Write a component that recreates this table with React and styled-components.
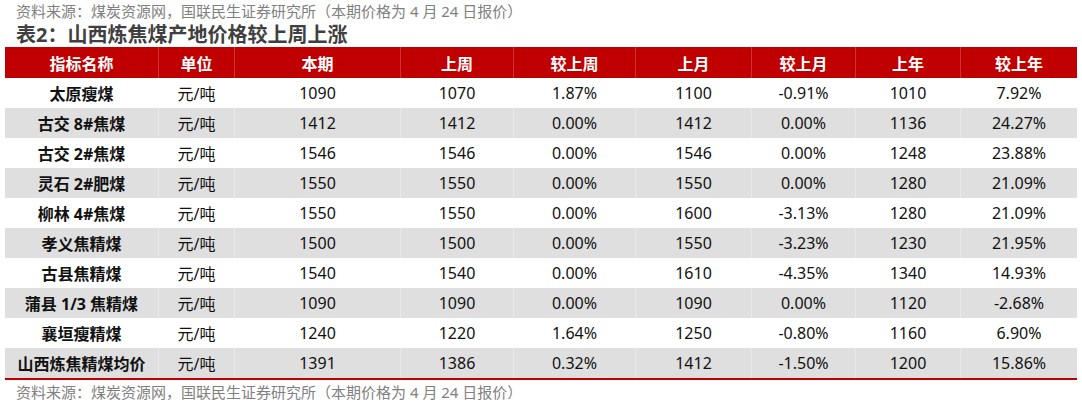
import React from "react";
import styled, { createGlobalStyle } from "styled-components";

const GlobalStyle = createGlobalStyle`
	body {
		margin: 0;
		background: #ffffff;
		font-family: "Noto Sans", "Noto Sans CJK SC", sans-serif;
	}
`;

const columns = ["指标名称", "单位", "本期", "上周", "较上周", "上月", "较上月", "上年", "较上年"];
const widths = "153px 76px 166px 113px 122px 116px 104px 105px 117px";

const rows = [
	["太原瘦煤", "元/吨", "1090", "1070", "1.87%", "1100", "-0.91%", "1010", "7.92%"],
	["古交 8#焦煤", "元/吨", "1412", "1412", "0.00%", "1412", "0.00%", "1136", "24.27%"],
	["古交 2#焦煤", "元/吨", "1546", "1546", "0.00%", "1546", "0.00%", "1248", "23.88%"],
	["灵石 2#肥煤", "元/吨", "1550", "1550", "0.00%", "1550", "0.00%", "1280", "21.09%"],
	["柳林 4#焦煤", "元/吨", "1550", "1550", "0.00%", "1600", "-3.13%", "1280", "21.09%"],
	["孝义焦精煤", "元/吨", "1500", "1500", "0.00%", "1550", "-3.23%", "1230", "21.95%"],
	["古县焦精煤", "元/吨", "1540", "1540", "0.00%", "1610", "-4.35%", "1340", "14.93%"],
	["蒲县 1/3 焦精煤", "元/吨", "1090", "1090", "0.00%", "1090", "0.00%", "1120", "-2.68%"],
	["襄垣瘦精煤", "元/吨", "1240", "1220", "1.64%", "1250", "-0.80%", "1160", "6.90%"],
	["山西炼焦精煤均价", "元/吨", "1391", "1386", "0.32%", "1412", "-1.50%", "1200", "15.86%"],
];

const source = "资料来源：煤炭资源网，国联民生证券研究所（本期价格为 4 月 24 日报价）";

const App = () => {
	return (
		<>
			<GlobalStyle />
			<Page>
				<Caption>{source}</Caption>
				<Title>表2：山西炼焦煤产地价格较上周上涨</Title>
				<Table>
					<HeaderRow>
						{columns.map((c) => (
							<HeaderCell key={c}>{c}</HeaderCell>
						))}
					</HeaderRow>
					{rows.map((r, i) => (
						<Row key={r[0]} $shaded={i % 2 === 1}>
							{r.map((v, j) => (
								<Cell key={j} $bold={j === 0} $shaded={i % 2 === 1}>
									{v}
								</Cell>
							))}
						</Row>
					))}
				</Table>
				<Caption $footer>{source}</Caption>
			</Page>
		</>
	);
};

const Page = styled.div`
	width: 1082px;
	height: 405px;
	overflow: hidden;
	padding: 0 5px;
	box-sizing: border-box;
`;

const Caption = styled.div`
	font-size: 15px;
	line-height: 22px;
	color: #808080;
	padding-left: 11px;
	margin-top: ${(p) => (p.$footer ? "1px" : "0")};
	white-space: nowrap;
`;

const Title = styled.div`
	font-size: 20px;
	font-weight: 700;
	line-height: 25px;
	color: #404040;
	padding-left: 11px;
	white-space: nowrap;
`;

const Table = styled.div`
	display: flex;
	flex-direction: column;
	border-bottom: 2px solid #c00000;
`;

const HeaderRow = styled.div`
	display: grid;
	grid-template-columns: ${widths};
	height: 31px;
	background: #c00000;
`;

const HeaderCell = styled.div`
	display: flex;
	align-items: center;
	justify-content: center;
	color: #ffffff;
	font-size: 16px;
	font-weight: 700;
	border-left: 1px solid #cc3333;
	&:first-child {
		border-left: none;
	}
`;

const Row = styled.div`
	display: grid;
	grid-template-columns: ${widths};
	height: 30px;
	background: ${(p) => (p.$shaded ? "#dfdfdf" : "#ffffff")};
`;

const Cell = styled.div`
	display: flex;
	align-items: center;
	justify-content: center;
	font-size: 16px;
	font-weight: ${(p) => (p.$bold ? 700 : 400)};
	color: #111111;
	white-space: nowrap;
	border-left: 1px solid ${(p) => (p.$shaded ? "#e9e9e9" : "#ffffff")};
	&:first-child {
		border-left: none;
	}
`;

export default App;
